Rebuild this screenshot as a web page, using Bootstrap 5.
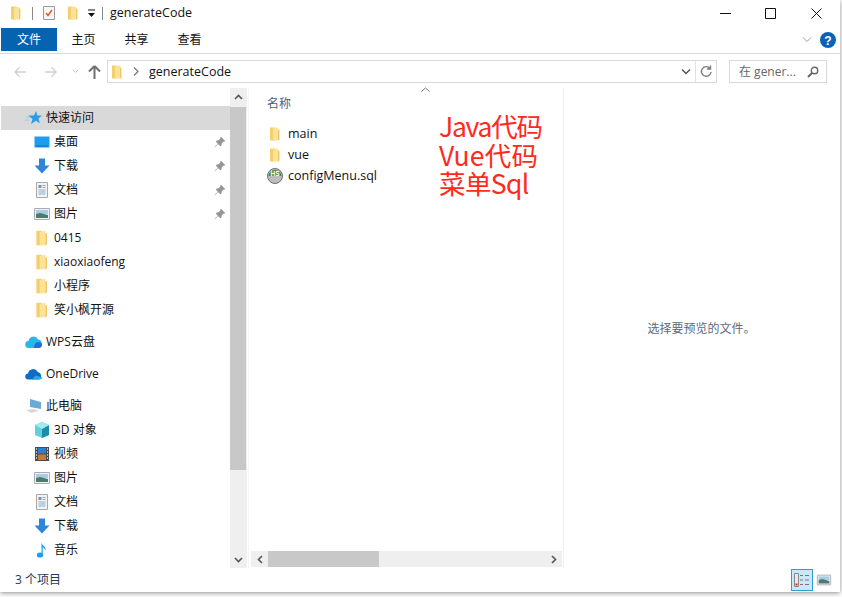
<!DOCTYPE html>
<html lang="zh">
<head>
    <meta charset="utf-8">
    <title>generateCode</title>
    <link href="https://cdn.jsdelivr.net/npm/bootstrap@5.3.6/dist/css/bootstrap.min.css" rel="stylesheet">
    <style>
        html, body { height: 597px; overflow: hidden; background: #fff; }
        body { font-family: "Open Sans", "Noto Sans CJK SC", sans-serif; font-size: 12px; color: #111; line-height: 16px; }
        .win { width: 840px; height: 592px; background: #fff; box-shadow: 0 1px 5px rgba(0,0,0,.45); position: relative; }
        .titlebar { height: 26px; padding-left: 8px; }
        .sep { width: 1px; height: 13px; background: #8a8a8a; }
        .win-btns { margin-right: 1px; }
        .win-btn { width: 45.5px; height: 26px; }
        .ribbon { height: 28px; border-bottom: 1px solid #dadada; padding-left: 1px; }
        .rtab { height: 23px; width: 53px; margin-top: 2px; font-size: 12px; }
        .rtab-on { width: 56px; background: #0563af; color: #fff; }
        .addr { height: 34px; padding: 6px 0 5px 14px; }
        .nav-back { margin-right: 17px; }
        .nav-drop { margin: 0 9px 0 15px; }
        .addr-box { height: 23px; border: 1px solid #d9d9d9; width: 610px; margin-left: 6px; }
        .addr-chev { margin: 0 10px 0 8px; }
        .crumb { font-size: 12.5px; }
        .search-box { height: 23px; width: 98px; border: 1px solid #d9d9d9; margin-left: 12px; color: #666; padding: 0 7px 0 9px; }
        .main { height: 480px; }
        .side { width: 229px; height: 480px; overflow: hidden; padding-top: 18px; margin-left: 1px; }
        .nrow { height: 24px; padding-right: 4px; }
        .nrow-top { padding-left: 24px; }
        .nrow-sub { padding-left: 32px; }
        .nrow-on { background: #d9d9d9; }
        .gap8 { margin-top: 8px; }
        .nico { width: 18px; height: 18px; margin-right: 3px; flex: none; }
        .sbar-v { width: 17px; background: #efefef; height: 480px; }
        .sbar-btn { height: 17px; }
        .thumb-v { height: 363px; background: #c8c8c8; margin: 2px 1px 0 0; }
        .files { width: 316px; margin-left: 1px; border-left: 1px solid #f5f5f5; border-right: 1px solid #f0f0f0; position: relative; }
        .col-head { height: 35px; padding: 8px 0 0 18px; color: #4c607a; }
        .frow { height: 21px; padding-left: 18px; font-size: 12.5px; }
        .fico { width: 16px; height: 16px; margin-right: 5px; flex: none; }
        .sbar-h { height: 16px; background: #efefef; margin: 0 1px 1px 2px; }
        .thumb-h { width: 111px; background: #c8c8c8; height: 16px; }
        .sbar-hb { width: 17px; height: 16px; }
        .preview { color: #606b78; padding: 233px 1px 0 0; }
        .status { height: 24px; padding: 0 5px 0 15px; color: #1c3a5c; }
        .view-on { width: 22px; height: 22px; background: #cce8f8; border: 1px solid #2f9bd8; }
        .view-off { width: 22px; height: 22px; }
        .note { position: absolute; left: 439px; top: 112px; color: #ff2a1c; font-family: "Noto Sans CJK SC", sans-serif; font-size: 26.5px; line-height: 28.5px; }
        .note-java { letter-spacing: -1.27px; }
        .note-vue { letter-spacing: .2px; }
        .note-sql { letter-spacing: -.6px; }
        .sort-up { position: absolute; left: 172px; top: -1px; }
        .t6 { margin-right: 6px; }
        .t7 { margin-right: 7px; }
        .t8 { margin-right: 8px; }
        .addr-folder { margin: 0 0 0 1px; }
    </style>
</head>
<body>
<svg width="0" height="0" class="position-absolute">
    <defs>
        <symbol id="folder" viewBox="0 0 16 16">
            <path d="M3 1.500h5v13H3.600L3 14z" fill="#f4cf6b"/>
            <path d="M6 2.500l5-1v13H6z" fill="#fbe29a"/>
            <path d="M11 3.500h1.400v10.500L11 14.500z" fill="#f2c65c"/>
        </symbol>
        <symbol id="pin" viewBox="0 0 12 12">
            <path d="M7 .8l4.200 4.200-1 .8-.8-.3L7.600 7.400l-.2 2-1 .8L4 7.900 1.400 10.900.9 10.400 3.800 7.700 1.800 5.400l.9-1 1.900-.1 1.800-1.900-.3-.8z" fill="#8f959b"/>
        </symbol>
        <symbol id="doc" viewBox="0 0 18 18">
            <path d="M3.500 1.500h11v15h-11z" fill="#f2f2f2" stroke="#a9a9a9"/>
            <path d="M5.500 4h3v3h-3z" fill="#6a9bc7"/>
            <path d="M9.500 4.500h3M9.500 6.500h3M5.500 9h7M5.500 11h7M5.500 13h7" stroke="#7fb0d8"/>
        </symbol>
        <symbol id="pic" viewBox="0 0 18 18">
            <path d="M1.500 3.500h15v11h-15z" fill="#eef3f7" stroke="#a9adb1"/>
            <path d="M3 5h12v4H3z" fill="#a9cbe6"/>
            <path d="M3 9l4-1 8 2v3H3z" fill="#4f7a6a"/>
        </symbol>
        <symbol id="down" viewBox="0 0 18 18">
            <path d="M6 1.500h6v7h4.500L9 16.500 1.500 8.500H6z" fill="#2f86d8"/>
        </symbol>
    </defs>
</svg>

<div class="win">
    <!-- title bar -->
    <div class="titlebar d-flex align-items-center">
        <svg class="fico t8"><use href="#folder"/></svg>
        <span class="sep t8"></span>
        <svg class="t8" width="16" height="16" viewBox="0 0 16 16"><path d="M2.500 1.500h11v13h-11z" fill="#f6f6f6" stroke="#9a9a9a"/><path d="M5 8l2 2.500L11 5" fill="none" stroke="#e2562a" stroke-width="1.400"/></svg>
        <svg class="fico t6"><use href="#folder"/></svg>
        <svg class="t6" width="9" height="9" viewBox="0 0 9 9"><path d="M1 1h7" stroke="#111"/><path d="M1 4h7L4.500 8z" fill="#111"/></svg>
        <span class="sep t7"></span>
        <span class="crumb">generateCode</span>
        <div class="ms-auto d-flex win-btns">
            <div class="win-btn d-flex align-items-center justify-content-center"><svg width="11" height="11"><path d="M0 5.500h11" stroke="#111"/></svg></div>
            <div class="win-btn d-flex align-items-center justify-content-center"><svg width="11" height="11"><path d="M.5.500h10v10H.5z" fill="none" stroke="#111"/></svg></div>
            <div class="win-btn d-flex align-items-center justify-content-center"><svg width="11" height="11"><path d="M.5.500l10 10M10.500.500l-10 10" stroke="#111"/></svg></div>
        </div>
    </div>

    <!-- ribbon tabs -->
    <div class="ribbon d-flex">
        <div class="rtab rtab-on d-flex align-items-center justify-content-center">文件</div>
        <div class="rtab d-flex align-items-center justify-content-center">主页</div>
        <div class="rtab d-flex align-items-center justify-content-center">共享</div>
        <div class="rtab d-flex align-items-center justify-content-center">查看</div>
        <div class="ms-auto d-flex align-items-center gap-2">
            <svg width="10" height="6" viewBox="0 0 10 6"><path d="M1 .500l4 4 4-4" fill="none" stroke="#9a9a9a"/></svg>
            <svg class="me-1" width="16" height="16" viewBox="0 0 16 16"><circle cx="8" cy="8" r="8" fill="#0b63b6"/><text x="8" y="12.500" text-anchor="middle" font-family="Liberation Sans" font-weight="700" font-size="12" fill="#fff">?</text></svg>
        </div>
    </div>

    <!-- address bar -->
    <div class="addr d-flex align-items-center">
        <svg class="nav-back" width="13" height="12" viewBox="0 0 14 12"><path d="M6 1L1 6l5 5M1 6h12" fill="none" stroke="#d0d0d0" stroke-width="1.500"/></svg>
        <svg width="13" height="12" viewBox="0 0 14 12"><path d="M8 1l5 5-5 5M13 6H1" fill="none" stroke="#d0d0d0" stroke-width="1.500"/></svg>
        <svg class="nav-drop" width="7" height="5" viewBox="0 0 7 5"><path d="M.5.500l3 3 3-3" fill="none" stroke="#c8c8c8"/></svg>
        <svg width="13" height="14" viewBox="0 0 13 14"><path d="M6.500 1L1 6.500M6.500 1L12 6.500M6.500 1v13" fill="none" stroke="#6f6f6f" stroke-width="2"/></svg>
        <div class="addr-box d-flex align-items-center">
            <svg class="fico addr-folder"><use href="#folder"/></svg>
            <svg class="addr-chev" width="6" height="9" viewBox="0 0 6 9"><path d="M1 .500l4 4-4 4" fill="none" stroke="#777" stroke-width="1.200"/></svg>
            <span class="crumb">generateCode</span>
            <svg class="ms-auto me-1" width="10" height="6" viewBox="0 0 10 6"><path d="M1 .500l4 4 4-4" fill="none" stroke="#555" stroke-width="1.500"/></svg>
            <div class="border-start h-100 d-flex align-items-center px-1">
                <svg width="12" height="13" viewBox="0 0 12 13"><path d="M10 3.500A4.800 4.800 0 1 0 11 7M10.500.500v3.500H7" fill="none" stroke="#7d7d7d" stroke-width="1.400"/></svg>
            </div>
        </div>
        <div class="search-box d-flex align-items-center justify-content-between">
            <span>在 gener...</span>
            <svg width="12" height="12" viewBox="0 0 12 12"><circle cx="7.500" cy="4.500" r="3.200" fill="none" stroke="#666" stroke-width="1.400"/><path d="M5 7l-4 4" stroke="#666" stroke-width="2"/></svg>
        </div>
    </div>

    <!-- main -->
    <div class="main d-flex">
        <div class="side">
            <div class="nrow nrow-top nrow-on d-flex align-items-center">
                <svg class="nico" viewBox="0 0 18 18"><path d="M11 2l1.500 4.500H17l-3.500 3 1.300 5L11 11.800 6 15l1.500-5L3 6.500h6z" fill="#2f9ce6"/><path d="M1 8h4M0 11h4" stroke="#9ccdee"/></svg>快速访问
            </div>
            <div class="nrow nrow-sub d-flex align-items-center">
                <svg class="nico" viewBox="0 0 18 18"><path d="M1.500 3.500h15v11h-15z" fill="#1e9cf0"/><path d="M3 13h12" stroke="#0d6dbb"/></svg>桌面
                <svg class="ms-auto" width="12" height="12"><use href="#pin"/></svg>
            </div>
            <div class="nrow nrow-sub d-flex align-items-center">
                <svg class="nico"><use href="#down"/></svg>下载
                <svg class="ms-auto" width="12" height="12"><use href="#pin"/></svg>
            </div>
            <div class="nrow nrow-sub d-flex align-items-center">
                <svg class="nico"><use href="#doc"/></svg>文档
                <svg class="ms-auto" width="12" height="12"><use href="#pin"/></svg>
            </div>
            <div class="nrow nrow-sub d-flex align-items-center">
                <svg class="nico"><use href="#pic"/></svg>图片
                <svg class="ms-auto" width="12" height="12"><use href="#pin"/></svg>
            </div>
            <div class="nrow nrow-sub d-flex align-items-center"><svg class="nico"><use href="#folder"/></svg>0415</div>
            <div class="nrow nrow-sub d-flex align-items-center"><svg class="nico"><use href="#folder"/></svg>xiaoxiaofeng</div>
            <div class="nrow nrow-sub d-flex align-items-center"><svg class="nico"><use href="#folder"/></svg>小程序</div>
            <div class="nrow nrow-sub d-flex align-items-center"><svg class="nico"><use href="#folder"/></svg>笑小枫开源</div>

            <div class="nrow nrow-top gap8 d-flex align-items-center">
                <svg class="nico" viewBox="0 0 18 18"><path d="M4 15a3.500 3.500 0 0 1-.500-7A5 5 0 0 1 13 6.500 4.300 4.300 0 0 1 13.500 15z" fill="#29b6e8"/><path d="M9 15c0-4 2-6 5-6 2 .5 3 2 3 3s-1 3-3.500 3z" fill="#1f6fe0"/></svg>WPS云盘
            </div>
            <div class="nrow nrow-top gap8 d-flex align-items-center">
                <svg class="nico" viewBox="0 0 18 18"><path d="M3.500 14.500a3 3 0 0 1-.500-6A5.200 5.200 0 0 1 12.800 7 4 4 0 0 1 14 14.500z" fill="#0f6cc4"/><path d="M7 14.500l3.500-4 7 2c-.4 1.300-1.700 2-3 2z" fill="#2ba5e8"/></svg>OneDrive
            </div>
            <div class="nrow nrow-top gap8 d-flex align-items-center">
                <svg class="nico" viewBox="0 0 18 18"><path d="M5 2l11 3v7L5 10z" fill="#6aa9d8"/><path d="M1 13l8-1 5 2-8 2z" fill="#d5d8db"/></svg>此电脑
            </div>
            <div class="nrow nrow-sub d-flex align-items-center">
                <svg class="nico" viewBox="0 0 18 18"><path d="M9 1l7 3v10l-7 3-7-3V4z" fill="#5fd0dc"/><path d="M9 8l7-4v10l-7 3z" fill="#178fa8"/><path d="M9 1l7 3-7 4-7-4z" fill="#a5e8ee"/></svg>3D 对象
            </div>
            <div class="nrow nrow-sub d-flex align-items-center">
                <svg class="nico" viewBox="0 0 18 18"><path d="M2 2h14v14H2z" fill="#4b4b4b"/><path d="M5 3h8v5.500H5z" fill="#2f7fd0"/><path d="M5 9.500h8V15H5z" fill="#c47a3a"/><path d="M3 4h1M3 7h1M3 10h1M3 13h1M14 4h1M14 7h1M14 10h1M14 13h1" stroke="#ddd" stroke-width="1.500"/></svg>视频
            </div>
            <div class="nrow nrow-sub d-flex align-items-center"><svg class="nico"><use href="#pic"/></svg>图片</div>
            <div class="nrow nrow-sub d-flex align-items-center"><svg class="nico"><use href="#doc"/></svg>文档</div>
            <div class="nrow nrow-sub d-flex align-items-center"><svg class="nico"><use href="#down"/></svg>下载</div>
            <div class="nrow nrow-sub d-flex align-items-center">
                <svg class="nico" viewBox="0 0 18 18"><ellipse cx="7" cy="14" rx="3.200" ry="2.600" fill="#1e9cf0"/><path d="M8.500 14V1.500c.5 3 4.500 3.500 4 8-.6-2-2.500-3-2.800-3.200V14z" fill="#1e9cf0"/></svg>音乐
            </div>
        </div>

        <div class="sbar-v d-flex flex-column">
            <div class="sbar-btn d-flex align-items-center justify-content-center"><svg width="9" height="6" viewBox="0 0 9 6"><path d="M1 5l3.500-3.500L8 5" fill="none" stroke="#555" stroke-width="1.600"/></svg></div>
            <div class="thumb-v"></div>
            <div class="sbar-btn mt-auto d-flex align-items-center justify-content-center"><svg width="9" height="6" viewBox="0 0 9 6"><path d="M1 1l3.500 3.500L8 1" fill="none" stroke="#555" stroke-width="1.600"/></svg></div>
        </div>

        <div class="files d-flex flex-column">
            <svg class="sort-up" width="9" height="5" viewBox="0 0 9 5"><path d="M.5 4.500l4-3.500 4 3.500" fill="none" stroke="#777"/></svg>
            <div class="col-head">名称</div>
            <div class="frow d-flex align-items-center"><svg class="fico"><use href="#folder"/></svg>main</div>
            <div class="frow d-flex align-items-center"><svg class="fico"><use href="#folder"/></svg>vue</div>
            <div class="frow d-flex align-items-center">
                <svg class="fico" viewBox="0 0 16 16"><circle cx="8" cy="8" r="7.500" fill="#bdbdbd" stroke="#6f6f6f"/><path d="M1.500 8a6.500 6 0 0 1 13 0z" fill="#3f8f3c"/><text x="8" y="8" text-anchor="middle" font-family="Liberation Sans" font-weight="700" font-size="6.500" fill="#fff">HS</text></svg>configMenu.sql
            </div>
            <div class="sbar-h mt-auto d-flex">
                <div class="sbar-hb d-flex align-items-center justify-content-center"><svg width="6" height="9" viewBox="0 0 6 9"><path d="M5 1L1.500 4.500 5 8" fill="none" stroke="#555" stroke-width="1.600"/></svg></div>
                <div class="thumb-h"></div>
                <div class="sbar-hb ms-auto d-flex align-items-center justify-content-center"><svg width="6" height="9" viewBox="0 0 6 9"><path d="M1 1l3.500 3.500L1 8" fill="none" stroke="#555" stroke-width="1.600"/></svg></div>
            </div>
        </div>

        <div class="preview flex-grow-1 text-center d-flex justify-content-center">
            <span>选择要预览的文件。</span>
        </div>
    </div>

    <!-- status -->
    <div class="status d-flex align-items-center">
        <span>3 个项目</span>
        <div class="ms-auto d-flex align-items-center">
            <div class="view-on d-flex align-items-center justify-content-center">
                <svg width="16" height="14" viewBox="0 0 16 14"><path d="M.5.500h4v13h-4z" fill="#e8e8e8" stroke="#888"/><path d="M6 2.500h3M11 2.500h4M6 7h3M11 7h4M6 11.500h3M11 11.500h4" stroke="#777" stroke-width="1.200"/><path d="M1.500 10.500h2v2h-2z" fill="#c03030"/></svg>
            </div>
            <div class="view-off d-flex align-items-center justify-content-center"><svg width="16" height="16"><use href="#pic"/></svg></div>
        </div>
    </div>

    <div class="note"><div class="note-java">Java代码</div><div class="note-vue">Vue代码</div><div class="note-sql">菜单Sql</div></div>
</div>
<script src="https://cdn.jsdelivr.net/npm/bootstrap@5.3.6/dist/js/bootstrap.bundle.min.js"></script>
</body>
</html>
